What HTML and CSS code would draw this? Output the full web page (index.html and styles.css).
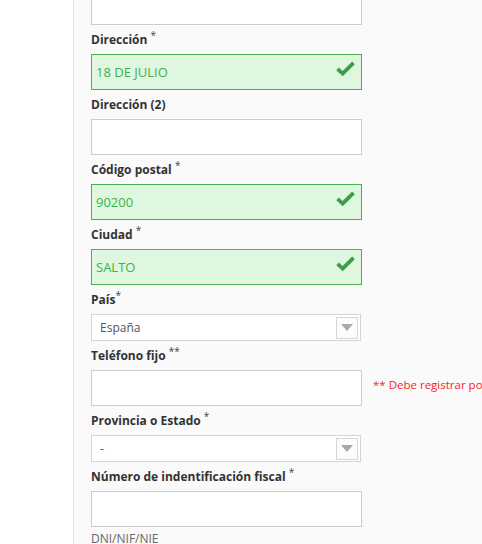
FILE: index.html
```html
<!DOCTYPE html>
<html lang="es">
<head>
<meta charset="utf-8">
<link rel="stylesheet" href="styles.css">
</head>
<body>
<div class="page">
  <div class="side"></div>
  <div class="main">
    <form class="form">
      <div class="field">
        <div class="input"></div>
      </div>
      <div class="field">
        <label class="label">Dirección <sup class="req">*</sup></label>
        <div class="input valid"><span class="value">18 DE JULIO</span><svg class="check" viewBox="0 0 20 16" width="19" height="15"><path d="M1.5 8.5 L7 13.5 L18.5 2" fill="none" stroke="#3e9e48" stroke-width="4"/></svg></div>
      </div>
      <div class="field">
        <label class="label">Dirección (2)</label>
        <div class="input"></div>
      </div>
      <div class="field">
        <label class="label">Código postal <sup class="req">*</sup></label>
        <div class="input valid"><span class="value">90200</span><svg class="check" viewBox="0 0 20 16" width="19" height="15"><path d="M1.5 8.5 L7 13.5 L18.5 2" fill="none" stroke="#3e9e48" stroke-width="4"/></svg></div>
      </div>
      <div class="field">
        <label class="label">Ciudad <sup class="req">*</sup></label>
        <div class="input valid"><span class="value">SALTO</span><svg class="check" viewBox="0 0 20 16" width="19" height="15"><path d="M1.5 8.5 L7 13.5 L18.5 2" fill="none" stroke="#3e9e48" stroke-width="4"/></svg></div>
      </div>
      <div class="field">
        <label class="label">País<sup class="req tight">*</sup></label>
        <div class="select"><span class="sel-value">España</span><span class="arrow"><svg viewBox="0 0 12 7" width="12" height="7"><path d="M0 0 H12 L6 7 Z" fill="#a9a9a9"/></svg></span></div>
      </div>
      <div class="field">
        <label class="label">Teléfono fijo <sup class="req">**</sup></label>
        <div class="row">
          <div class="input"></div>
          <span class="note">** Debe registrar por lo menos un número de teléfono</span>
        </div>
      </div>
      <div class="field">
        <label class="label">Provincia o Estado <sup class="req">*</sup></label>
        <div class="select"><span class="sel-value">-</span><span class="arrow"><svg viewBox="0 0 12 7" width="12" height="7"><path d="M0 0 H12 L6 7 Z" fill="#a9a9a9"/></svg></span></div>
      </div>
      <div class="field">
        <label class="label">Número de indentificación fiscal <sup class="req">*</sup></label>
        <div class="input"></div>
        <div class="help">DNI/NIF/NIE</div>
      </div>
    </form>
  </div>
</div>
</body>
</html>
```
FILE: styles.css
```css
html, body {
  margin: 0;
  padding: 0;
  background: #ffffff;
  overflow: hidden;
}
body {
  font-family: "Open Sans", "DejaVu Sans", sans-serif;
  color: #333333;
}
.page {
  display: flex;
  height: 544px;
}
.side {
  width: 73px;
  flex: none;
  background: #ffffff;
}
.main {
  flex: 1;
  border-left: 1px solid #dedede;
  background: #fafafa;
  padding-left: 17px;
  white-space: nowrap;
  overflow: hidden;
}
.form {
  display: flex;
  flex-direction: column;
  margin-top: -11px;
}
.field {
  display: flex;
  flex-direction: column;
  align-items: flex-start;
}
.label {
  display: block;
  font-size: 12px;
  font-weight: bold;
  line-height: 16px;
  margin: 7px 0 6px;
  color: #333333;
}
.req {
  font-size: 10px;
  font-weight: normal;
  vertical-align: 5px;
  line-height: 0;
  color: #444;
}
.input {
  box-sizing: border-box;
  width: 271px;
  height: 36px;
  border: 1px solid #cccccc;
  background: #ffffff;
  display: flex;
  align-items: center;
  justify-content: space-between;
  padding: 0 6px 0 4px;
  flex: none;
}
.input.valid {
  border-color: #4caf50;
  background: #dff7df;
}
.value {
  font-size: 13px;
  color: #3cb34a;
}
.check {
  margin-top: -8px;
}
.select {
  box-sizing: border-box;
  width: 270px;
  height: 27px;
  border: 1px solid #d4d4d4;
  background: #ffffff;
  display: flex;
  align-items: center;
  justify-content: space-between;
  padding: 0 2px 0 8px;
}
.sel-value {
  font-size: 12px;
  color: #555555;
}
.arrow {
  box-sizing: border-box;
  width: 22px;
  height: 22px;
  border: 1px solid #d6d6d6;
  background: #fcfcfc;
  display: flex;
  align-items: center;
  justify-content: center;
}
.row {
  display: flex;
  align-items: center;
  gap: 11px;
}
.note {
  font-size: 11.5px;
  color: #ff1a1a;
  margin-bottom: 8px;
}
.help {
  font-size: 12px;
  color: #666666;
  margin-top: 3px;
}
```
